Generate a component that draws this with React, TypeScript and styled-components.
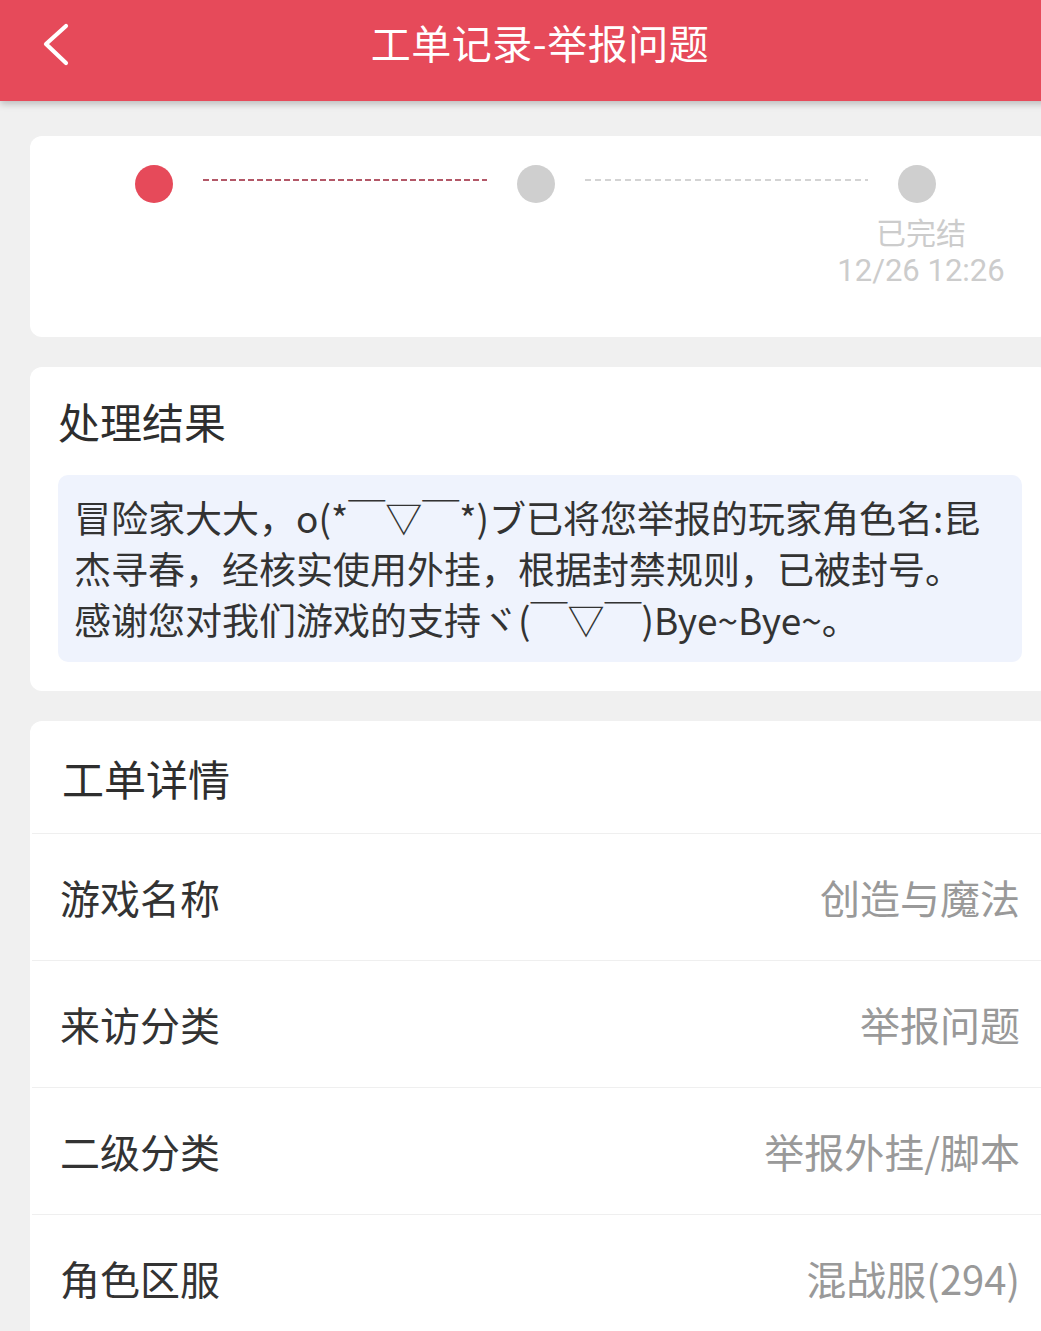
import React from "react";
import styled, { createGlobalStyle } from "styled-components";

const GlobalStyle = createGlobalStyle`
  html, body {
    margin: 0;
    padding: 0;
    background: #f0f0f0;
    overflow: hidden;
  }
  body {
    font-family: "Noto Sans CJK SC", "Noto Sans", sans-serif;
  }
`;

const Page = styled.div`
  width: 1080px;
  min-height: 1331px;
  background: #f0f0f0;
`;

const Header = styled.header`
  position: relative;
  z-index: 1;
  height: 101px;
  background: #e64a5a;
  box-shadow: 0 3px 7px rgba(0, 0, 0, 0.22);
  display: grid;
  grid-template-columns: 100px 1fr 100px;
  align-items: start;
`;

const BackButton = styled.div`
  height: 86px;
  display: flex;
  align-items: center;
  padding-left: 42px;
  padding-top: 4px;
  box-sizing: border-box;
`;

const Title = styled.h1`
  margin: 0;
  height: 84px;
  display: flex;
  align-items: center;
  justify-content: center;
  color: #fff;
  font-size: 40px;
  font-weight: 400;
  letter-spacing: 0.5px;
`;

const Content = styled.main`
  padding: 35px 30px 0;
  display: flex;
  flex-direction: column;
  gap: 30px;
`;

const Card = styled.section<{ $pad?: string }>`
  background: #fff;
  border-radius: 12px;
  padding: ${(p) => p.$pad ?? "0"};
`;

const StepRow = styled.div`
  display: flex;
  align-items: flex-start;
  padding: 0 114px 0 105px;
`;

const Step = styled.div`
  width: 38px;
  display: flex;
  flex-direction: column;
  align-items: center;
`;

const Dot = styled.div<{ $active?: boolean }>`
  width: 38px;
  height: 38px;
  border-radius: 50%;
  background: ${(p) => (p.$active ? "#e64a5a" : "#cfcfcf")};
`;

const Connector = styled.div<{ $active?: boolean }>`
  flex: 1;
  height: 2px;
  margin: 14px 30px 0;
  background: repeating-linear-gradient(
    to right,
    ${(p) => (p.$active ? "#b35868" : "#d3d3d3")} 0 6px,
    transparent 6px ${(p) => (p.$active ? "9px" : "10px")}
  );
`;

const StepLabels = styled.div`
  margin-top: 10px;
  display: flex;
  flex-direction: column;
  align-items: center;
  gap: 3px;
  transform: translateX(4px);
`;

const StepLabel = styled.div<{ $latin?: boolean }>`
  white-space: nowrap;
  color: #cccccc;
  font-family: ${(p) =>
    p.$latin ? `Roboto, "Noto Sans", sans-serif` : `"Noto Sans CJK SC", sans-serif`};
  font-size: ${(p) => (p.$latin ? "31px" : "30px")};
  line-height: ${(p) => (p.$latin ? "36px" : "37px")};
`;

const SectionTitle = styled.h2<{ $pad: string }>`
  margin: 0;
  padding: ${(p) => p.$pad};
  font-size: 42px;
  line-height: 52px;
  font-weight: 400;
  color: #2e2e2e;
`;

const ResultBox = styled.div`
  background: #eff3fd;
  border-radius: 10px;
  padding: 17px 12px 17px 16px;
  color: #333;
  font-size: 37px;
  line-height: 51px;
  white-space: nowrap;
  overflow: hidden;
`;

const Row = styled.div`
  height: 126px;
  border-top: 1px solid #efefef;
  margin-left: 2px;
  padding: 0 30px 0 28px;
  display: flex;
  align-items: center;
  justify-content: space-between;
  font-size: 40px;
`;

const Label = styled.span`
  color: #333;
`;

const Value = styled.span`
  color: #999;
`;

const ChevronLeft = () => (
  <svg width="30" height="44" viewBox="0 0 30 44" fill="none">
    <path
      d="M24 3 L4 21 L24 40"
      stroke="#fff"
      strokeWidth="4.2"
      strokeLinecap="round"
      strokeLinejoin="round"
    />
  </svg>
);

const rows: [string, string][] = [
  ["游戏名称", "创造与魔法"],
  ["来访分类", "举报问题"],
  ["二级分类", "举报外挂/脚本"],
  ["角色区服", "混战服(294)"],
];

export default function App() {
  return (
    <Page>
      <GlobalStyle />
      <Header>
        <BackButton>
          <ChevronLeft />
        </BackButton>
        <Title>工单记录-举报问题</Title>
        <div />
      </Header>
      <Content>
        <Card $pad="29px 0 48px">
          <StepRow>
            <Step>
              <Dot $active />
            </Step>
            <Connector $active />
            <Step>
              <Dot />
            </Step>
            <Connector />
            <Step>
              <Dot />
              <StepLabels>
                <StepLabel>已完结</StepLabel>
                <StepLabel $latin>12/26 12:26</StepLabel>
              </StepLabels>
            </Step>
          </StepRow>
        </Card>
        <Card $pad="0 28px 29px">
          <SectionTitle $pad="28px 0 28px">处理结果</SectionTitle>
          <ResultBox>
            冒险家大大，o(*￣▽￣*)ブ已将您举报的玩家角色名:昆
            <br />
            杰寻春，经核实使用外挂，根据封禁规则，已被封号。
            <br />
            感谢您对我们游戏的支持ヾ(￣▽￣)Bye~Bye~。
          </ResultBox>
        </Card>
        <Card>
          <SectionTitle $pad="31px 32px 29px">工单详情</SectionTitle>
          {rows.map(([k, v]) => (
            <Row key={k}>
              <Label>{k}</Label>
              <Value>{v}</Value>
            </Row>
          ))}
        </Card>
      </Content>
    </Page>
  );
}
